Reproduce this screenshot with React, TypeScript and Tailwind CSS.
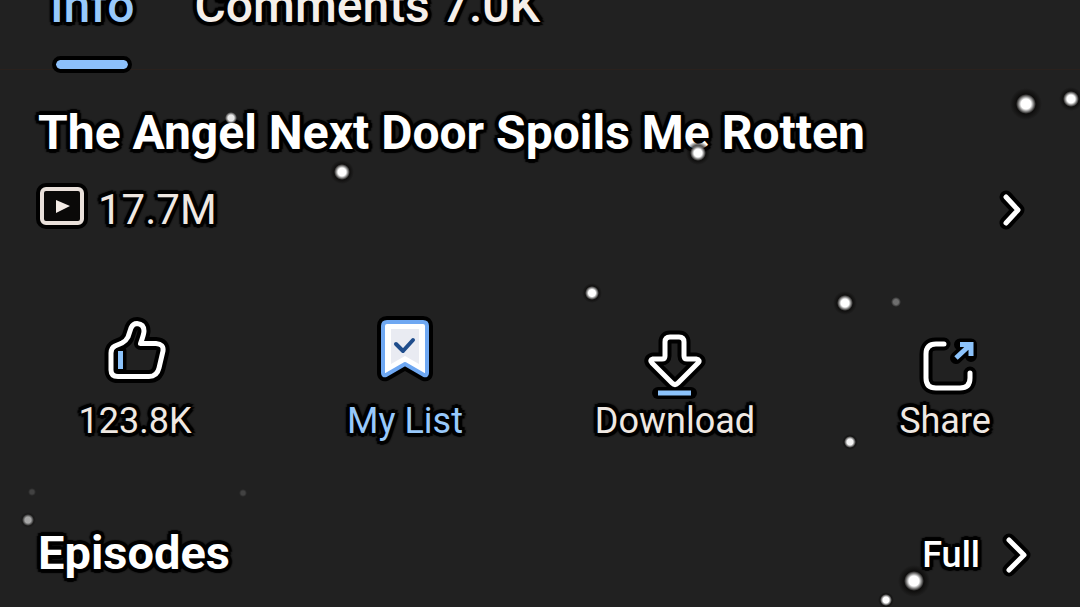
import { ReactNode } from "react";

const OUTLINE =
  "[text-shadow:4px_0_1px_#000,-4px_0_1px_#000,0_4px_1px_#000,0_-4px_1px_#000,3px_3px_1px_#000,-3px_3px_1px_#000,3px_-3px_1px_#000,-3px_-3px_1px_#000,0_0_4px_#000]";

const flakes = [
  { x: 1026, y: 104, r: 8, o: 1 },
  { x: 1071, y: 99, r: 6, o: 1 },
  { x: 231, y: 118, r: 4, o: 0.9 },
  { x: 342, y: 172, r: 6, o: 1 },
  { x: 698, y: 153, r: 6, o: 1 },
  { x: 592, y: 293, r: 5, o: 1 },
  { x: 845, y: 303, r: 6, o: 1 },
  { x: 896, y: 302, r: 3, o: 0.35 },
  { x: 850, y: 442, r: 4, o: 0.95 },
  { x: 28, y: 520, r: 4, o: 0.6 },
  { x: 32, y: 492, r: 2, o: 0.15 },
  { x: 243, y: 493, r: 2, o: 0.15 },
  { x: 914, y: 581, r: 8, o: 1 },
  { x: 886, y: 600, r: 4, o: 1 },
];

function Snow() {
  return (
    <svg className="pointer-events-none absolute left-0 top-0 overflow-visible" width="1" height="1" aria-hidden="true">
      <defs>
        <radialGradient id="flake">
          <stop offset="0.5" stopColor="#fff" />
          <stop offset="1" stopColor="#fff" stopOpacity="0" />
        </radialGradient>
        <radialGradient id="shade">
          <stop offset="0.5" stopColor="#080706" />
          <stop offset="1" stopColor="#080706" stopOpacity="0" />
        </radialGradient>
      </defs>
      {flakes.map((f) => (
        <g key={`${f.x}-${f.y}`} opacity={f.o}>
          {f.r > 4 || f.y > 400 ? <circle cx={f.x} cy={f.y} r={f.r * 2} fill="url(#shade)" /> : null}
          <circle cx={f.x} cy={f.y} r={f.r + 2} fill="url(#flake)" />
        </g>
      ))}
    </svg>
  );
}

// every stroke gets a wider black one beneath it
function Glyph({ w, h, d, accent, children }: { w: number; h: number; d: string; accent?: string; children?: ReactNode }) {
  return (
    <svg width={w} height={h} viewBox={`0 0 ${w} ${h}`} className="shrink-0 overflow-visible" fill="none" strokeLinecap="round" strokeLinejoin="round" aria-hidden="true">
      <path d={d} stroke="#000" strokeWidth="13" />
      {accent && <path d={accent} stroke="#000" strokeWidth="12" />}
      <path d={d} stroke="#fff" strokeWidth="5" />
      {accent && <path d={accent} stroke="#8cc3fb" strokeWidth="5" strokeLinecap="butt" strokeLinejoin="miter" />}
      {children}
    </svg>
  );
}

function LikeIcon() {
  return (
    <Glyph
      w={80}
      h={80}
      d="M16 50V33Q16 28 20 26L27 23Q31 21 33 17L36 8Q38 3.5 42 3.5Q49 4 49 11Q49 14 45.500 23.500H61Q69 24 68 31L64 48Q62 56.500 54 56.500H23Q16 56.500 16 50Z"
      accent="M25.500 31V49"
    />
  );
}

function ListIcon() {
  const shape = "M22 2H58Q62 2 62 6V53Q62 56 59 55L40 44L21 55Q18 56 18 53V6Q18 2 22 2Z";
  return (
    <svg width="80" height="80" viewBox="0 0 80 80" className="overflow-visible" strokeLinejoin="round" strokeLinecap="round" aria-hidden="true">
      <path d={shape} fill="#000" stroke="#000" strokeWidth="12" />
      <path d={shape} fill="#fff" stroke="#6fa8f2" strokeWidth="4" />
      <path d="M26 9H54V44L40 36L26 44Z" fill="#e9ebf2" />
      <path d="M31 24L38 31L48 20" fill="none" stroke="#1f4d8c" strokeWidth="4" />
    </svg>
  );
}

function DownloadIcon() {
  return (
    <Glyph
      w={80}
      h={80}
      d="M35 17H44Q49 17 49 22V36Q49 39 52 39H61Q66 40 63 43L43 63Q40 66 37 63L17 43Q14 40 18 39H27Q30 39 30 36V22Q30 17 35 17Z"
      accent="M23 73H56"
    />
  );
}

function ShareIcon() {
  return (
    <Glyph w={80} h={80} d="M39 24H31Q21 24 21 34V58Q21 68 31 68H55Q65 68 65 58V53" accent="M51 38L65 25M55 24.500H66V36">
      <path d="M58 24H67V33Z" fill="#8cc3fb" />
    </Glyph>
  );
}

function ViewsIcon() {
  return (
    <svg width="44" height="44" viewBox="0 0 44 44" className="shrink-0 overflow-visible" strokeLinejoin="round" aria-hidden="true">
      <rect x="2" y="1" width="40" height="34" rx="4" fill="#000" stroke="#000" strokeWidth="12" />
      <rect x="2" y="1" width="40" height="34" rx="4" fill="#0a0908" stroke="#e9e0da" strokeWidth="4" />
      <path d="M16 12L30 18L16 25Z" fill="#f4ece6" />
    </svg>
  );
}

function Action({ label, icon, active }: { label: string; icon: ReactNode; active?: boolean }) {
  return (
    <button type="button" className={`flex flex-col items-center ${active ? "text-[#98c9fb]" : "text-[#efe8e2]"}`}>
      {icon}
      <span className={`text-[36px] leading-[42px] whitespace-nowrap ${OUTLINE}`}>{label}</span>
    </button>
  );
}

export default function App() {
  return (
    <div className="relative min-h-screen w-full overflow-hidden bg-[#212121] font-[Roboto,sans-serif] text-white">
      <nav className="relative z-10 flex h-[69px] items-end gap-[60px] pl-[50px] font-medium text-[48px] leading-[56px]">
        <button type="button" className="flex flex-col items-center gap-[26px] text-[#98c9fb]">
          <span className={OUTLINE}>Info</span>
          <span className="h-[9px] w-[72px] rounded-full bg-[#8cc0fb] outline-4 outline-black" />
        </button>
        <button type="button" className="pb-[35px] text-[#f5efea]">
          <span className={`whitespace-nowrap ${OUTLINE}`}>Comments 7.0K</span>
        </button>
      </nav>
      <main className="border-t border-[#2a211d] pt-[35px]">
        <h1 className={`pl-[38px] text-[48px] leading-[56px] font-bold whitespace-nowrap ${OUTLINE}`}>
          The Angel Next Door Spoils Me Rotten
        </h1>
        <button type="button" aria-label="Show details" className="mt-[23px] flex w-full items-center justify-between pr-[56px] pl-[40px] text-[#efe8e2]">
          <span className="flex items-center gap-[14px]">
            <ViewsIcon />
            <span className={`text-[42px] leading-[52px] ${OUTLINE}`}>17.7M</span>
          </span>
          <Glyph w={24} h={32} d="M6 3L18 16L6 29" />
        </button>
        <div className="mt-[84px] grid grid-cols-4">
          <Action label="123.8K" icon={<LikeIcon />} />
          <Action label="My List" icon={<ListIcon />} active />
          <Action label="Download" icon={<DownloadIcon />} />
          <Action label="Share" icon={<ShareIcon />} />
        </div>
        <section className="mt-[83px] flex items-center justify-between pr-[52px] pl-[38px] pb-5">
          <h2 className={`text-[47px] leading-[56px] font-bold ${OUTLINE}`}>Episodes</h2>
          <button type="button" className="flex items-center gap-6 pt-1 text-[36px] leading-[44px] font-medium">
            <span className={OUTLINE}>Full</span>
            <Glyph w={24} h={36} d="M5 3L20 18L5 33" />
          </button>
        </section>
      </main>
      <Snow />
    </div>
  );
}
